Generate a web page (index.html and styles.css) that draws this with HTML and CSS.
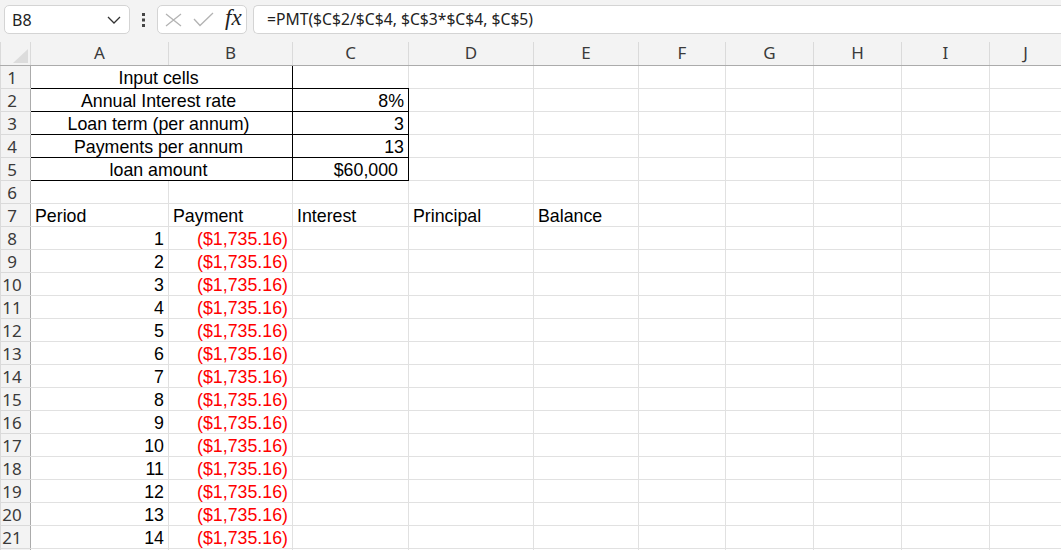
FILE: index.html
```html
<html>
<head>
    <link rel="stylesheet" href="styles.css">
</head>
<body>
    <div class="toolbar">
        <div class="name-box">
            <span>B8</span>
            <svg class="chevron" width="14" height="8" viewBox="0 0 14 8"><polyline points="1,1 7,7 13,1" fill="none" stroke="#333" stroke-width="1.3"/></svg>
        </div>
        <div class="grip">
            <svg width="4" height="14" viewBox="0 0 4 14"><rect x="0" y="0" width="3" height="3" fill="#444"/><rect x="0" y="5.5" width="3" height="3" fill="#444"/><rect x="0" y="11" width="3" height="3" fill="#444"/></svg>
        </div>
        <div class="fx-box">
            <svg width="17" height="14" viewBox="0 0 17 14"><path d="M1 1 L16 13 M16 1 L1 13" stroke="#b3b3b3" stroke-width="1.3" fill="none"/></svg>
            <svg width="21" height="15" viewBox="0 0 21 15"><polyline points="1,7 7,13.5 20,1" stroke="#b3b3b3" stroke-width="1.3" fill="none"/></svg>
            <span class="fx">fx</span>
        </div>
        <div class="formula">=PMT($C$2/$C$4, $C$3*$C$4, $C$5)</div>
    </div>

    <table class="sheet">
        <colgroup>
            <col class="c-row">
            <col class="c-a">
            <col class="c-b">
            <col class="c-c">
            <col class="c-d">
            <col class="c-e">
            <col class="c-f">
            <col class="c-g">
            <col class="c-h">
            <col class="c-i">
            <col class="c-j">
        </colgroup>
        <tr class="head">
            <th class="corner"><svg width="30" height="22" viewBox="0 0 30 22"><polygon points="12,21 27,21 27,7" fill="#dcdcdc"/></svg></th>
            <th>A</th><th>B</th><th>C</th><th>D</th><th>E</th><th>F</th><th>G</th><th>H</th><th>I</th><th>J</th>
        </tr>
        <tr>
            <th class="num">1</th>
            <td colspan="2" class="center line-rb">Input cells</td>
            <td class="line-b"></td>
            <td></td><td></td><td></td><td></td><td></td><td></td><td></td>
        </tr>
        <tr>
            <th class="num">2</th>
            <td colspan="2" class="center box">Annual Interest rate</td>
            <td class="right box">8%</td>
            <td></td><td></td><td></td><td></td><td></td><td></td><td></td>
        </tr>
        <tr>
            <th class="num">3</th>
            <td colspan="2" class="center box">Loan term (per annum)</td>
            <td class="right box">3</td>
            <td></td><td></td><td></td><td></td><td></td><td></td><td></td>
        </tr>
        <tr>
            <th class="num">4</th>
            <td colspan="2" class="center box">Payments per annum</td>
            <td class="right box">13</td>
            <td></td><td></td><td></td><td></td><td></td><td></td><td></td>
        </tr>
        <tr>
            <th class="num">5</th>
            <td colspan="2" class="center box">loan amount</td>
            <td class="right box currency">$60,000</td>
            <td></td><td></td><td></td><td></td><td></td><td></td><td></td>
        </tr>
        <tr>
            <th class="num">6</th>
            <td></td><td></td><td></td><td></td><td></td><td></td><td></td><td></td><td></td><td></td>
        </tr>
        <tr>
            <th class="num">7</th>
            <td>Period</td><td>Payment</td><td>Interest</td><td>Principal</td><td>Balance</td>
            <td></td><td></td><td></td><td></td><td></td>
        </tr>
        <tr><th class="num">8</th><td class="right">1</td><td class="right neg">($1,735.16)</td><td></td><td></td><td></td><td></td><td></td><td></td><td></td><td></td></tr>
        <tr><th class="num">9</th><td class="right">2</td><td class="right neg">($1,735.16)</td><td></td><td></td><td></td><td></td><td></td><td></td><td></td><td></td></tr>
        <tr><th class="num">10</th><td class="right">3</td><td class="right neg">($1,735.16)</td><td></td><td></td><td></td><td></td><td></td><td></td><td></td><td></td></tr>
        <tr><th class="num">11</th><td class="right">4</td><td class="right neg">($1,735.16)</td><td></td><td></td><td></td><td></td><td></td><td></td><td></td><td></td></tr>
        <tr><th class="num">12</th><td class="right">5</td><td class="right neg">($1,735.16)</td><td></td><td></td><td></td><td></td><td></td><td></td><td></td><td></td></tr>
        <tr><th class="num">13</th><td class="right">6</td><td class="right neg">($1,735.16)</td><td></td><td></td><td></td><td></td><td></td><td></td><td></td><td></td></tr>
        <tr><th class="num">14</th><td class="right">7</td><td class="right neg">($1,735.16)</td><td></td><td></td><td></td><td></td><td></td><td></td><td></td><td></td></tr>
        <tr><th class="num">15</th><td class="right">8</td><td class="right neg">($1,735.16)</td><td></td><td></td><td></td><td></td><td></td><td></td><td></td><td></td></tr>
        <tr><th class="num">16</th><td class="right">9</td><td class="right neg">($1,735.16)</td><td></td><td></td><td></td><td></td><td></td><td></td><td></td><td></td></tr>
        <tr><th class="num">17</th><td class="right">10</td><td class="right neg">($1,735.16)</td><td></td><td></td><td></td><td></td><td></td><td></td><td></td><td></td></tr>
        <tr><th class="num">18</th><td class="right">11</td><td class="right neg">($1,735.16)</td><td></td><td></td><td></td><td></td><td></td><td></td><td></td><td></td></tr>
        <tr><th class="num">19</th><td class="right">12</td><td class="right neg">($1,735.16)</td><td></td><td></td><td></td><td></td><td></td><td></td><td></td><td></td></tr>
        <tr><th class="num">20</th><td class="right">13</td><td class="right neg">($1,735.16)</td><td></td><td></td><td></td><td></td><td></td><td></td><td></td><td></td></tr>
        <tr><th class="num">21</th><td class="right">14</td><td class="right neg">($1,735.16)</td><td></td><td></td><td></td><td></td><td></td><td></td><td></td><td></td></tr>
        <tr><th class="num"></th><td></td><td></td><td></td><td></td><td></td><td></td><td></td><td></td><td></td><td></td></tr>
    </table>
</body>
</html>
```

FILE: styles.css
```css
body {
    margin: 0;
    background-color: #fff;
    font-family: "Liberation Sans", Arial, sans-serif;
    overflow: hidden;
}

/* formula bar */
.toolbar {
    display: flex;
    align-items: flex-start;
    height: 42px;
    box-sizing: border-box;
    padding: 5px 0 0 4px;
    background-color: #f3f3f3;
    font-family: "Noto Sans", "Open Sans", sans-serif;
    color: #222;
}

.name-box {
    display: flex;
    align-items: center;
    justify-content: space-between;
    width: 126px;
    height: 29px;
    box-sizing: border-box;
    padding: 0 8px 0 7px;
    border: 1px solid #d4d4d4;
    border-radius: 5px;
    background-color: #fff;
    font-size: 16px;
}

.grip {
    display: flex;
    justify-content: center;
    width: 27px;
    padding-top: 8px;
}

.fx-box {
    display: flex;
    align-items: center;
    gap: 11px;
    width: 90px;
    height: 29px;
    box-sizing: border-box;
    padding: 0 0 0 7px;
    border: 1px solid #d4d4d4;
    border-radius: 5px;
    background-color: #fff;
}

.fx {
    font-family: "Liberation Serif", "Times New Roman", serif;
    font-style: italic;
    font-size: 23px;
    color: #222;
    margin-left: 0;
    margin-top: -4px;
}

.formula {
    flex: 1;
    height: 29px;
    box-sizing: border-box;
    margin-left: 6px;
    padding-left: 13px;
    border: 1px solid #d4d4d4;
    border-right: none;
    border-radius: 5px 0 0 5px;
    background-color: #fff;
    font-size: 15.7px;
    line-height: 27px;
}

/* grid */
.sheet {
    border-collapse: collapse;
    table-layout: fixed;
    width: 1061px;
}

.c-row { width: 30px; }
.c-a { width: 138px; }
.c-b { width: 124px; }
.c-c { width: 116px; }
.c-d { width: 125px; }
.c-e { width: 105px; }
.c-f { width: 87px; }
.c-g { width: 88px; }
.c-h { width: 88px; }
.c-i { width: 88px; }
.c-j { width: 72px; }

.sheet tr {
    height: 23px;
}

.sheet td,
.sheet th {
    padding: 0 4px;
    border: 1px solid #e1e1e1;
    white-space: nowrap;
    overflow: hidden;
    font-size: 17.8px;
    line-height: 20px;
    vertical-align: bottom;
    text-align: left;
}

.sheet th {
    background-color: #f3f3f3;
    font-family: "Noto Sans", "Open Sans", sans-serif;
    font-weight: normal;
    font-size: 17px;
    color: #3a3a3a;
}

.head th {
    text-align: center;
    border-top: none;
    border-color: #dadada;
    border-bottom-color: #ababab;
    vertical-align: middle;
}

.head .corner {
    padding: 0;
    vertical-align: top;
    line-height: 0;
}

.sheet th.num {
    text-align: center;
    padding: 0 7px 0 0;
    border-color: #dadada;
    border-right-color: #ababab;
}

.sheet .center {
    text-align: center;
    padding: 0 7px 0 1px;
}

.sheet .right {
    text-align: right;
}

.sheet .currency {
    padding-right: 10px;
}

.neg {
    color: #ff0000;
}

.box {
    border: 1px solid #000 !important;
}

.line-rb {
    border-right: 1px solid #000 !important;
    border-bottom: 1px solid #000 !important;
}

.line-b {
    border-bottom: 1px solid #000 !important;
}
```
